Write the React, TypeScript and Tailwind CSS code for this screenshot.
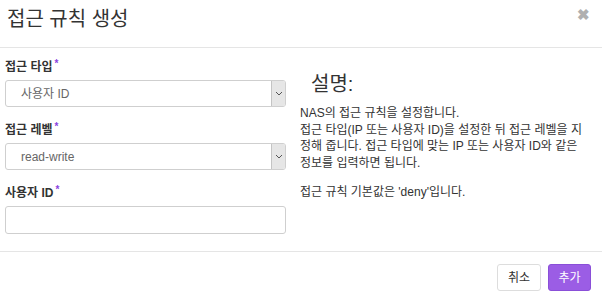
import React from "react";

const font = { fontFamily: '"Liberation Sans", "Noto Sans CJK KR", sans-serif' };

function Chevron() {
  return (
    <svg width="8" height="5" viewBox="0 0 8 5" fill="none">
      <path d="M1 1 L4 4 L7 1" stroke="#555" strokeWidth="1" />
    </svg>
  );
}

function Select({ value }: { value: string }) {
  return (
    <div className="flex h-[27px] w-[281px] items-stretch rounded-[3px] border border-[#cfcfcf] bg-white">
      <div className="flex flex-1 items-center pl-[15px] text-[12px] text-[#666]">{value}</div>
      <div className="flex w-[14px] items-center justify-center rounded-r-[2px] border-l border-[#c4c4c4] bg-[#e6e6e6]">
        <Chevron />
      </div>
    </div>
  );
}

function Label({ text }: { text: string }) {
  return (
    <div className="flex items-start text-[12px] font-bold text-[#333] leading-[14px]">
      <span>{text}</span>
      <span className="ml-[2px] -mt-[3px] text-[10px] text-[#8a3fe0]">*</span>
    </div>
  );
}

export default function App() {
  return (
    <div className="h-[297px] w-[602px] bg-white" style={font}>
      <div className="flex h-[48px] items-center justify-between border-b border-[#e5e5e5] pl-[7px] pr-[12px]">
        <div className="text-[20px] text-[#333] leading-none -mt-[10px]">접근 규칙 생성</div>
        <div className="-mt-[17px] text-[15px] font-bold text-[#b0b0b0]">✖</div>
      </div>
      <div className="flex h-[204px] border-b border-[#e5e5e5] pl-[5px]">
        <div className="flex w-[281px] flex-col pt-[12px]">
          <Label text="접근 타입" />
          <div className="mt-[6px]">
            <Select value="사용자 ID" />
          </div>
          <div className="mt-[16px]">
            <Label text="접근 레벨" />
          </div>
          <div className="mt-[6px]">
            <Select value="read-write" />
          </div>
          <div className="mt-[16px]">
            <Label text="사용자 ID" />
          </div>
          <div className="mt-[6px] h-[28px] w-[281px] rounded-[3px] border border-[#cfcfcf] bg-white" />
        </div>
        <div className="ml-[14px] flex flex-col pt-[25px] text-[12px] text-[#333]">
          <div className="ml-[11px] text-[20px] leading-[22px]">설명:</div>
          <div className="mt-[10px] w-[290px] leading-[16.5px]">
            <div>NAS의 접근 규칙을 설정합니다.</div>
            <div>접근 타입(IP 또는 사용자 ID)을 설정한 뒤 접근 레벨을 지정해 줍니다. 접근 타입에 맞는 IP 또는 사용자 ID와 같은 정보를 입력하면 됩니다.</div>
            <div className="h-[13px]" />
            <div>접근 규칙 기본값은 'deny'입니다.</div>
          </div>
        </div>
      </div>
      <div className="flex justify-end gap-[7px] pr-[11px] pt-[12px]">
        <button className="h-[27px] w-[44px] rounded-[3px] border border-[#ddd] bg-white text-[12px] text-[#333]">취소</button>
        <button className="h-[27px] w-[43px] rounded-[3px] border border-[#8a4fd8] bg-[#9b5de5] text-[12px] text-white">추가</button>
      </div>
    </div>
  );
}
